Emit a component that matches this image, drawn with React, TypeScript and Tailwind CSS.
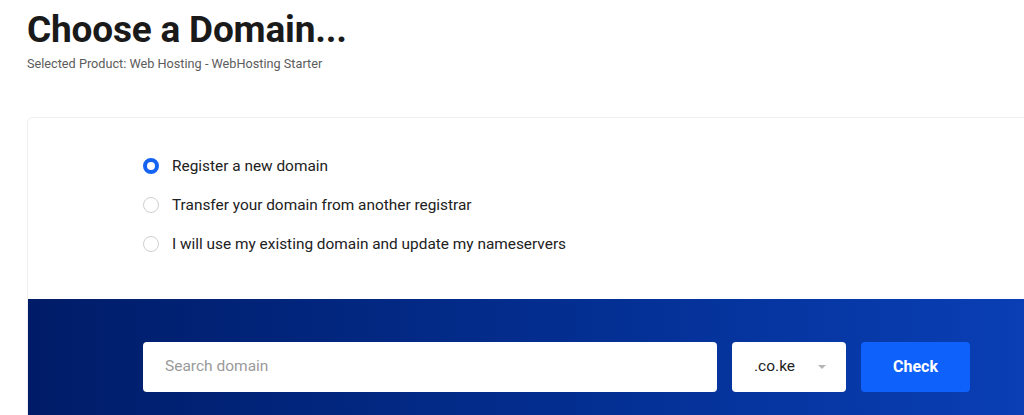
const options = [
  { label: "Register a new domain", checked: true },
  { label: "Transfer your domain from another registrar", checked: false },
  { label: "I will use my existing domain and update my nameservers", checked: false },
];

export default function App() {
  return (
    <div
      className="h-[415px] w-[1024px] overflow-hidden bg-white"
      style={{ fontFamily: "Roboto, 'Liberation Sans', sans-serif" }}
    >
      <div className="pl-[27px] pt-[8px]">
        <h1 className="text-[37px] font-bold leading-[44px] tracking-[-0.2px] text-[#1a1a1a]">
          Choose a Domain...
        </h1>
        <p className="mt-[4px] text-[12.7px] leading-[16px] text-[#5c5c5c]">
          Selected Product: Web Hosting - WebHosting Starter
        </p>
      </div>

      <div className="ml-[27px] mt-[45px] w-[1040px] overflow-hidden rounded-tl-[6px] border border-[#efefef]">
        <div className="flex flex-col gap-[17px] pb-[44px] pl-[115px] pt-[37px]">
          {options.map((o) => (
            <label key={o.label} className="flex items-center gap-[13px]">
              {o.checked ? (
                <span className="h-[16px] w-[16px] rounded-full border-[4.5px] border-[#1463f3] bg-white" />
              ) : (
                <span className="h-[16px] w-[16px] rounded-full border border-[#cfcfcf] bg-white" />
              )}
              <span className="text-[15.4px] leading-[22px] text-[#212121]">{o.label}</span>
            </label>
          ))}
        </div>

        <div className="flex h-[120px] items-start gap-[15px] bg-gradient-to-r from-[#001c68] to-[#0a40b8] pl-[115px] pt-[43px]">
          <div className="flex h-[50px] w-[574px] items-center rounded-[4px] bg-white px-[22px] text-[15.5px] text-[#9a9a9a]">
            Search domain
          </div>
          <div className="flex h-[50px] w-[114px] items-center justify-between rounded-[4px] bg-white pl-[22px] pr-[20px] text-[15.5px] text-[#222]">
            <span>.co.ke</span>
            <span className="h-0 w-0 border-x-[4px] border-t-[4px] border-x-transparent border-t-[#b5b5b5]" />
          </div>
          <div className="flex h-[50px] w-[109px] items-center justify-center rounded-[4px] bg-[#0f61fb] text-[16px] font-bold text-white">
            Check
          </div>
        </div>
      </div>
    </div>
  );
}
